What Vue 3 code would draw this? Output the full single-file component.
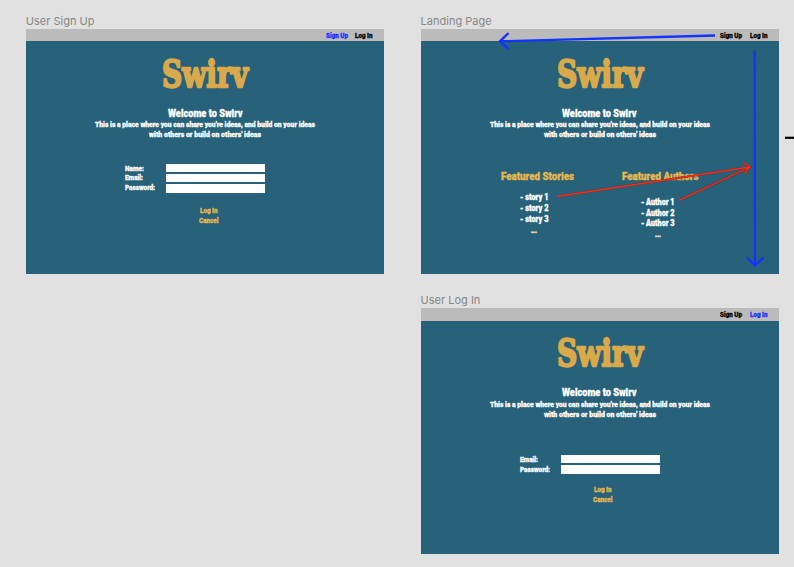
<script setup>
import { h } from 'vue'

// A line of display lettering condensed to a given width.
const Line = (p) =>
  h('svg', { class: 'line', width: p.w, height: p.h, role: 'text' }, [
    h('text', {
      x: 0,
      y: p.base,
      'font-size': p.size,
      textLength: p.w,
      lengthAdjust: 'spacingAndGlyphs'
    }, p.text)
  ])
Line.props = ['text', 'w', 'h', 'base', 'size']

const frames = [
  {
    id: 'signup', label: 'User Sign Up', active: 'Sign Up',
    fields: [['Name:', 19], ['Email:', 18], ['Password:', 30]]
  },
  {
    id: 'landing', label: 'Landing Page', active: '',
    lists: [
      { title: 'Featured Stories', w: 73, iw: 28.5, items: ['- story 1', '- story 2', '- story 3'] },
      { title: 'Featured Authors', w: 76.5, iw: 33.5, items: ['- Author 1', '- Author 2', '- Author 3'] }
    ]
  },
  {
    id: 'login', label: 'User Log In', active: 'Log In',
    fields: [['Email:', 18], ['Password:', 30]]
  }
]
</script>

<template>
  <main class="board">
    <section v-for="f in frames" :key="f.id" class="frame" :class="f.id">
      <h2 class="label">{{ f.label }}</h2>
      <div class="page">
        <nav class="nav">
          <Line text="Sign Up" :w="22" :h="12" :base="8.8" :size="7.8" :class="{ active: f.active === 'Sign Up' }" />
          <Line text="Log In" :w="17.5" :h="12" :base="8.8" :size="7.8" :class="{ active: f.active === 'Log In' }" />
        </nav>
        <h1 class="logo">
          <Line text="Swirv" :w="86" :h="44" :base="35.8" :size="37" />
        </h1>
        <div class="intro">
          <Line text="Welcome to Swirv" :w="74.5" :h="12.5" :base="10.2" :size="10.8" />
          <Line text="This is a place where you can share you're ideas, and build on your ideas" :w="220" :h="9.9" :base="8.2" :size="8" />
          <Line text="with others or build on others' ideas" :w="112" :h="9.9" :base="8.2" :size="8" />
        </div>

        <template v-if="f.fields">
          <form class="form">
            <div class="names">
              <Line v-for="n in f.fields" :key="n[0]" :text="n[0]" :w="n[1]" :h="9.7" :base="7" :size="7.6" />
            </div>
            <div class="inputs">
              <i v-for="n in f.fields" :key="n[0]" class="input"></i>
            </div>
          </form>
          <div class="actions">
            <Line text="Log In" :w="17.5" :h="9.7" :base="7" :size="7.6" />
            <Line text="Cancel" :w="19.5" :h="9.7" :base="7" :size="7.6" />
          </div>
        </template>

        <div v-else class="lists">
          <div v-for="l in f.lists" :key="l.title" class="list">
            <Line class="gold" :text="l.title" :w="l.w" :h="14" :base="10.2" :size="10.4" />
            <div class="items">
              <Line v-for="i in l.items" :key="i" :text="i" :w="l.iw" :h="10.8" :base="8.1" :size="8.4" />
              <Line text="..." :w="6" :h="10.8" :base="8.3" :size="8.4" />
            </div>
          </div>
        </div>
      </div>
    </section>

    <svg class="arrows" width="794" height="567" viewBox="0 0 794 567">
      <g class="blue">
        <path d="M715 35.5L500 41.3M508.5 33L500 41.3L508.5 49" />
        <path d="M754.7 51L755 265.5M747 257.5L755 265.5L763.3 257.5" />
      </g>
      <g v-for="k in ['edge', 'red']" :key="k" :class="k">
        <path d="M557 196.5L750 167M743 162.3L750 167L744.5 173.5" />
        <path d="M680 199.8L750 167" />
      </g>
      <path class="black" d="M785 137.8H794" />
    </svg>
  </main>
</template>

<style>
body {
  background: #e1e1e1;
  overflow: hidden;
}
.line {
  display: block;
  flex: none;
  overflow: visible;
  fill: currentColor;
  stroke: currentColor;
  stroke-width: 0.3px;
  font-family: Roboto, "Open Sans", sans-serif;
  font-weight: 900;
}
.logo .line {
  font-family: "DejaVu Serif", serif;
  stroke-width: 2.3px;
  stroke-linejoin: round;
}
</style>

<style scoped>
.board {
  position: relative;
  box-sizing: border-box;
  width: 794px;
  height: 567px;
  padding: 13px 0 0 25.8px;
  display: grid;
  grid-template-columns: 358px 358px;
  grid-template-rows: 261.3px 261.3px;
  column-gap: 36.8px;
  row-gap: 18.2px;
}
.login {
  grid-column: 2;
}
.label {
  margin: 0;
  height: 16px;
  font: 400 11px/16px Inter, sans-serif;
  color: #868686;
  white-space: nowrap;
}
.page {
  height: 245.3px;
  background: #28627a;
  color: #fff;
  display: flex;
  flex-direction: column;
}
.nav {
  height: 12.3px;
  flex: none;
  background: #bbb;
  color: #000;
  display: flex;
  justify-content: flex-end;
  gap: 7.5px;
  padding-right: 11.2px;
}
.active {
  color: #1433ff;
}
.logo {
  margin: 9.7px 0 0;
  height: 44px;
  display: flex;
  justify-content: center;
  color: #d9a94b;
}
.intro {
  margin-top: 12px;
  height: 32.3px;
  display: flex;
  flex-direction: column;
  align-items: center;
}
.form {
  box-sizing: border-box;
  height: 66.7px;
  padding: 24.4px 0 0 99px;
  display: flex;
}
.names {
  width: 41.3px;
}
.inputs {
  display: flex;
  flex-direction: column;
  gap: 2.3px;
}
.input {
  width: 99px;
  height: 8px;
  background: #fff;
}
.input:last-child {
  height: 9px;
}
.login .form {
  padding-top: 36.2px;
}
.login .names {
  padding-top: 0.5px;
}
.actions {
  display: flex;
  flex-direction: column;
  align-items: center;
  padding-left: 7px;
  color: #e8b84c;
}
.lists {
  display: flex;
  gap: 48.5px;
  padding: 31px 0 0 80.2px;
}
.list {
  display: flex;
  flex-direction: column;
  align-items: center;
}
.gold {
  color: #e8b84c;
}
.items {
  padding: 8px 6px 0 0;
  display: flex;
  flex-direction: column;
  align-items: center;
}
.list + .list .items {
  padding-top: 12.5px;
}
.arrows {
  position: absolute;
  left: 0;
  top: 0;
  fill: none;
}
.blue {
  stroke: #1433ff;
  stroke-width: 2.4px;
}
.edge {
  stroke: #6b2a38;
  stroke-width: 2.2px;
}
.red {
  stroke: #fa2d12;
  stroke-width: 1.3px;
}
.black {
  stroke: #000;
  stroke-width: 2.2px;
}
</style>
